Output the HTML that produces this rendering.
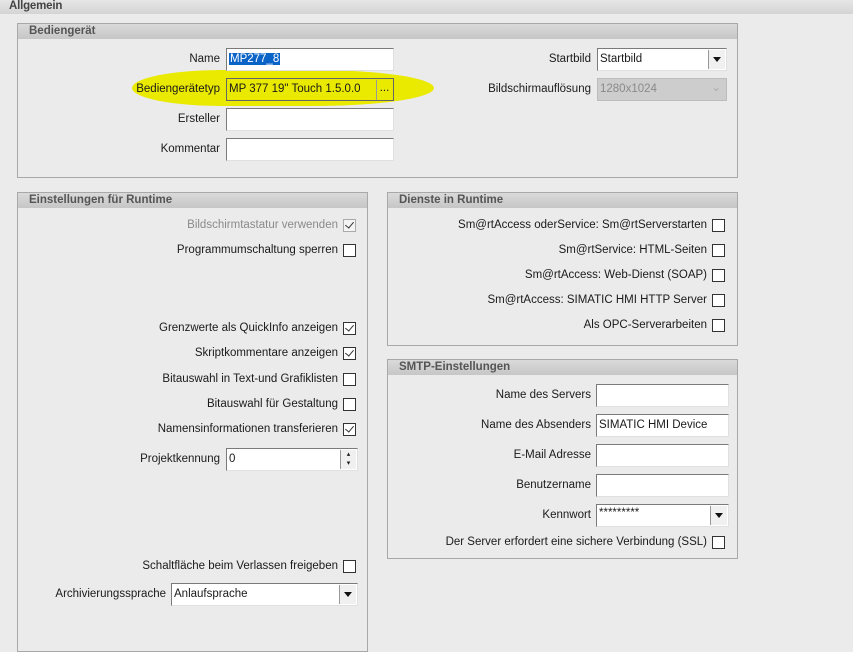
<!DOCTYPE html>
<html><head><meta charset="utf-8"><style>
body{margin:0;width:853px;height:638px;background:#ebebeb;font-family:"Liberation Sans",sans-serif;font-size:11.5px;color:#1a1a1a;position:relative;overflow:hidden}
.a{position:absolute}
.top{left:0;top:0;width:853px;height:14px;background:linear-gradient(#e6e6e6,#d4d4d4);font-weight:bold;color:#444;line-height:12px;padding-left:9px;box-sizing:border-box;letter-spacing:-0.2px}
.box{position:absolute;border:1px solid #a8a8a8;box-sizing:border-box}
.hd{position:absolute;left:0;right:0;top:0;height:15px;background:linear-gradient(#dadada,#c6c6c6);font-weight:bold;color:#555;line-height:15px;padding-left:11px}
.l{position:absolute;text-align:right;line-height:14px;white-space:nowrap}
.in{position:absolute;background:#fff;border:1px solid #7a7a7a;border-right-color:#e0e0e0;border-bottom-color:#e0e0e0;box-sizing:border-box;height:23px;line-height:20px;padding-left:2px;white-space:nowrap;overflow:hidden}
.cb{position:absolute;width:13px;height:13px;border:1px solid #333;background:#fff;box-sizing:border-box}
.cb.c::after{content:"";position:absolute;left:3px;top:0px;width:4px;height:7px;border:solid #333;border-width:0 1.5px 1.5px 0;transform:rotate(40deg)}
.dd{position:absolute;right:1px;top:1px;width:16px;bottom:1px;background:#f0f0f0;border-left:1px solid #999}
.dd::after{content:"";position:absolute;left:4px;top:7px;border:4px solid transparent;border-top:5px solid #111;border-bottom:0}
</style></head><body>
<div class="a top">Allgemein</div>

<div class="box" style="left:17px;top:23px;width:721px;height:155px">
<div class="hd">Bediengerät</div></div>
<div class="a" style="left:132px;top:70px;width:302px;height:36px;background:#eaea00;border-radius:30% 40% 40% 30%/50%"></div>
<div class="l" style="left:0;width:220px;top:52px">Name</div>
<div class="in" style="left:226px;top:48px;width:168px"><span style="background:#0a64c8;color:#fff;padding:0 1px;line-height:14px">MP277_8</span></div>
<div class="l" style="left:0;width:220px;top:82px">Bediengerätetyp</div>
<div class="in" style="left:226px;top:78px;width:168px;background:#eaea00;border-color:#666">MP 377 19" Touch 1.5.0.0<div class="a" style="right:1px;top:1px;width:15px;bottom:0;border-left:1px solid #999;text-align:center;line-height:16px">...</div></div>
<div class="l" style="left:0;width:220px;top:112px">Ersteller</div>
<div class="in" style="left:226px;top:108px;width:168px"></div>
<div class="l" style="left:0;width:220px;top:142px">Kommentar</div>
<div class="in" style="left:226px;top:138px;width:168px"></div>

<div class="l" style="left:0;width:591px;top:52px">Startbild</div>
<div class="in" style="left:597px;top:48px;width:130px">Startbild<div class="dd"></div></div>
<div class="l" style="left:0;width:591px;top:82px">Bildschirmauflösung</div>
<div class="in" style="left:597px;top:78px;width:130px;background:#cdcdcd;border-color:#bcbcbc;color:#8a8a8a">1280x1024<span class="a" style="right:5px;top:-1px;color:#aaa">&#8964;</span></div>

<div class="box" style="left:17px;top:192px;width:351px;height:460px">
<div class="hd">Einstellungen für Runtime</div></div>
<div class="l" style="left:0;width:338px;top:218px;color:#8a8a8a">Bildschirmtastatur verwenden</div>
<div class="cb c" style="left:343px;top:219px;border-color:#aaa;background:#f4f4f4"></div>
<div class="l" style="left:0;width:338px;top:243px">Programmumschaltung sperren</div>
<div class="cb" style="left:343px;top:244px"></div>
<div class="l" style="left:0;width:338px;top:321px">Grenzwerte als QuickInfo anzeigen</div>
<div class="cb c" style="left:343px;top:322px"></div>
<div class="l" style="left:0;width:338px;top:346px">Skriptkommentare anzeigen</div>
<div class="cb c" style="left:343px;top:347px"></div>
<div class="l" style="left:0;width:338px;top:372px">Bitauswahl in Text-und Grafiklisten</div>
<div class="cb" style="left:343px;top:373px"></div>
<div class="l" style="left:0;width:338px;top:397px">Bitauswahl für Gestaltung</div>
<div class="cb" style="left:343px;top:398px"></div>
<div class="l" style="left:0;width:338px;top:422px">Namensinformationen transferieren</div>
<div class="cb c" style="left:343px;top:423px"></div>
<div class="l" style="left:0;width:220px;top:452px">Projektkennung</div>
<div class="in" style="left:226px;top:448px;width:132px">0<div class="a" style="right:1px;top:1px;width:15px;bottom:1px;background:#f0f0f0;border-left:1px solid #999;font-size:7px;line-height:9px;text-align:center">▴<br>▾</div></div>
<div class="l" style="left:0;width:338px;top:559px">Schaltfläche beim Verlassen freigeben</div>
<div class="cb" style="left:343px;top:560px"></div>
<div class="l" style="left:0;width:166px;top:587px">Archivierungssprache</div>
<div class="in" style="left:171px;top:583px;width:187px">Anlaufsprache<div class="dd"></div></div>

<div class="box" style="left:387px;top:192px;width:351px;height:154px">
<div class="hd">Dienste in Runtime</div></div>
<div class="l" style="left:0;width:707px;top:218px">Sm@rtAccess oderService: Sm@rtServerstarten</div>
<div class="cb" style="left:712px;top:219px"></div>
<div class="l" style="left:0;width:707px;top:243px">Sm@rtService: HTML-Seiten</div>
<div class="cb" style="left:712px;top:244px"></div>
<div class="l" style="left:0;width:707px;top:268px">Sm@rtAccess: Web-Dienst (SOAP)</div>
<div class="cb" style="left:712px;top:269px"></div>
<div class="l" style="left:0;width:707px;top:293px">Sm@rtAccess: SIMATIC HMI HTTP Server</div>
<div class="cb" style="left:712px;top:294px"></div>
<div class="l" style="left:0;width:707px;top:318px">Als OPC-Serverarbeiten</div>
<div class="cb" style="left:712px;top:319px"></div>

<div class="box" style="left:387px;top:359px;width:351px;height:200px">
<div class="hd">SMTP-Einstellungen</div></div>
<div class="l" style="left:0;width:591px;top:388px">Name des Servers</div>
<div class="in" style="left:596px;top:384px;width:133px"></div>
<div class="l" style="left:0;width:591px;top:418px">Name des Absenders</div>
<div class="in" style="left:596px;top:414px;width:133px">SIMATIC HMI Device</div>
<div class="l" style="left:0;width:591px;top:448px">E-Mail Adresse</div>
<div class="in" style="left:596px;top:444px;width:133px"></div>
<div class="l" style="left:0;width:591px;top:478px">Benutzername</div>
<div class="in" style="left:596px;top:474px;width:133px"></div>
<div class="l" style="left:0;width:591px;top:508px">Kennwort</div>
<div class="in" style="left:596px;top:504px;width:133px;line-height:16px">*********<div class="dd"></div></div>
<div class="l" style="left:0;width:707px;top:535px">Der Server erfordert eine sichere Verbindung (SSL)</div>
<div class="cb" style="left:712px;top:536px"></div>
</body></html>
